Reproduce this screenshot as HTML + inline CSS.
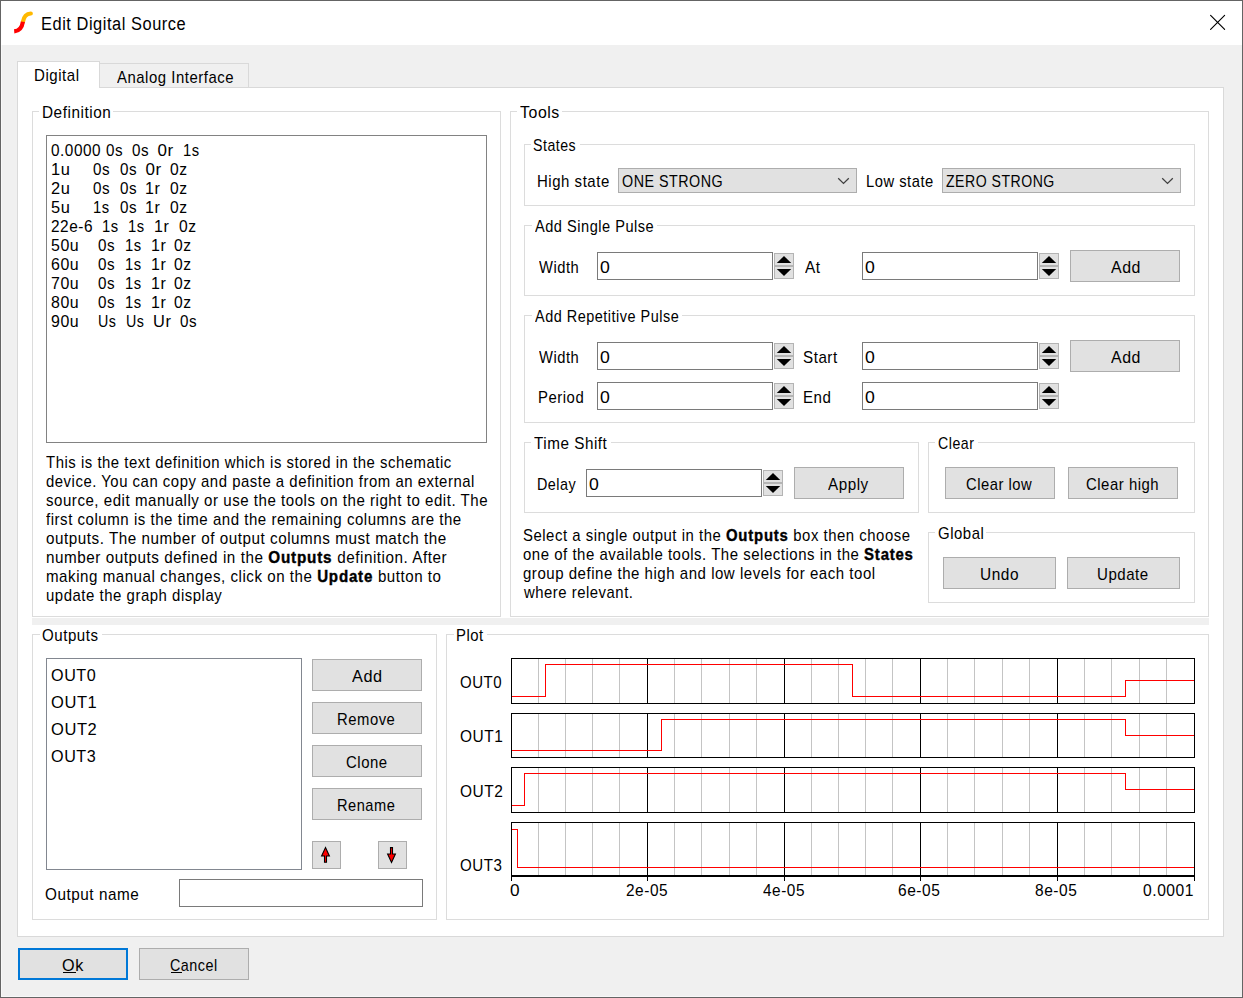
<!DOCTYPE html><html><head><meta charset='utf-8'><style>html,body{margin:0;padding:0;}body{width:1243px;height:998px;overflow:hidden;position:relative;background:#f0f0f0;}.r{position:absolute;box-sizing:border-box;}.t{position:absolute;white-space:nowrap;font-family:'Liberation Sans', sans-serif;line-height:20px;transform-origin:0 0;letter-spacing:0.6px;}b{font-weight:bold;letter-spacing:0.9px;-webkit-text-stroke:0.4px #000}</style></head><body><div class="r" style="left:0px;top:0px;width:1243px;height:998px;background:#f0f0f0;"></div><div class="r" style="left:1px;top:1px;width:1241px;height:44px;background:#ffffff;"></div><div class="r" style="left:0px;top:0px;width:1243px;height:1px;background:#646464;"></div><div class="r" style="left:0px;top:997px;width:1243px;height:1px;background:#646464;"></div><div class="r" style="left:0px;top:0px;width:1px;height:998px;background:#646464;"></div><div class="r" style="left:1242px;top:0px;width:1px;height:998px;background:#646464;"></div><div class="r" style="left:1px;top:45px;width:1px;height:952px;background:#f8f8f8;"></div><div class="r" style="left:1px;top:996px;width:1241px;height:1px;background:#f8f8f8;"></div><svg class="r" style="left:0;top:0" width="60" height="45"><path d="M30.8,13.5 C26.2,13.7 23.7,17.2 22.9,21.9" fill="none" stroke="#ffb900" stroke-width="4.2" stroke-linecap="round"/><path d="M22.9,21.7 C22.1,27.2 19.4,30.9 14.2,31.4" fill="none" stroke="#ff0000" stroke-width="4.2"/></svg><svg class="r" style="left:1200px;top:5px" width="35" height="35"><path d="M10.6,10.4 L24.6,24.4 M24.6,10.4 L10.6,24.4" stroke="#000" stroke-width="1.15" stroke-linecap="round" fill="none"/></svg><div class="r" style="left:17px;top:87px;width:1207px;height:850px;background:#ffffff;border:1px solid #d9d9d9;"></div><div class="r" style="left:99px;top:63px;width:150px;height:25px;background:#f0f0f0;border:1px solid #d9d9d9;"></div><div class="r" style="left:17px;top:61px;width:83px;height:27px;background:#ffffff;border:1px solid #d9d9d9;border-bottom:none;"></div><div class="r" style="left:18px;top:87px;width:81px;height:2px;background:#ffffff;"></div><div class="r" style="left:32px;top:111px;width:469px;height:506px;border:1px solid #dcdcdc;"></div><div class="r" style="left:39px;top:110px;width:74px;height:3px;background:#ffffff;"></div><div class="r" style="left:510px;top:111px;width:699px;height:506px;border:1px solid #dcdcdc;"></div><div class="r" style="left:517px;top:110px;width:45px;height:3px;background:#ffffff;"></div><div class="r" style="left:524px;top:144px;width:671px;height:62px;border:1px solid #dcdcdc;"></div><div class="r" style="left:531px;top:143px;width:49px;height:3px;background:#ffffff;"></div><div class="r" style="left:524px;top:225px;width:671px;height:71px;border:1px solid #dcdcdc;"></div><div class="r" style="left:532px;top:224px;width:125px;height:3px;background:#ffffff;"></div><div class="r" style="left:524px;top:315px;width:671px;height:108px;border:1px solid #dcdcdc;"></div><div class="r" style="left:532px;top:314px;width:150px;height:3px;background:#ffffff;"></div><div class="r" style="left:524px;top:442px;width:395px;height:71px;border:1px solid #dcdcdc;"></div><div class="r" style="left:531px;top:441px;width:80px;height:3px;background:#ffffff;"></div><div class="r" style="left:928px;top:442px;width:267px;height:71px;border:1px solid #dcdcdc;"></div><div class="r" style="left:935px;top:441px;width:43px;height:3px;background:#ffffff;"></div><div class="r" style="left:928px;top:532px;width:267px;height:71px;border:1px solid #dcdcdc;"></div><div class="r" style="left:935px;top:531px;width:51px;height:3px;background:#ffffff;"></div><div class="r" style="left:32px;top:618px;width:1177px;height:7px;background:#f0f0f0;"></div><div class="r" style="left:32px;top:634px;width:405px;height:286px;border:1px solid #dcdcdc;"></div><div class="r" style="left:40px;top:633px;width:62px;height:3px;background:#ffffff;"></div><div class="r" style="left:446px;top:634px;width:763px;height:286px;border:1px solid #dcdcdc;"></div><div class="r" style="left:454px;top:633px;width:33px;height:3px;background:#ffffff;"></div><div class="r" style="left:46px;top:135px;width:441px;height:308px;background:#ffffff;border:1px solid #828282;"></div><div class="r" style="left:618px;top:168px;width:239px;height:25px;background:#e1e1e1;border:1px solid #adadad;"></div><svg class="r" style="left:831px;top:168px" width="25" height="25"><path d="M7.2,10.3 L12.5,15.4 L17.8,10.3" fill="none" stroke="#404040" stroke-width="1.3"/></svg><div class="r" style="left:942px;top:168px;width:239px;height:25px;background:#e1e1e1;border:1px solid #adadad;"></div><svg class="r" style="left:1155px;top:168px" width="25" height="25"><path d="M7.2,10.3 L12.5,15.4 L17.8,10.3" fill="none" stroke="#404040" stroke-width="1.3"/></svg><div class="r" style="left:597px;top:252px;width:176px;height:28px;background:#ffffff;border:1px solid #7a7a7a;"></div><div class="r" style="left:774px;top:253px;width:20px;height:26px;background:#e1e1e1;border:1px solid #b4b4b4;"></div><div class="r" style="left:774px;top:265px;width:20px;height:2px;background:#b4b4b4;"></div><svg class="r" style="left:774px;top:253px" width="20" height="26"><path d="M2.8,10.0 L10.0,3.0 L17.2,10.0 Z" fill="#000"/><path d="M2.8,16.0 L10.0,23.0 L17.2,16.0 Z" fill="#000"/></svg><div class="r" style="left:862px;top:252px;width:176px;height:28px;background:#ffffff;border:1px solid #7a7a7a;"></div><div class="r" style="left:1039px;top:253px;width:20px;height:26px;background:#e1e1e1;border:1px solid #b4b4b4;"></div><div class="r" style="left:1039px;top:265px;width:20px;height:2px;background:#b4b4b4;"></div><svg class="r" style="left:1039px;top:253px" width="20" height="26"><path d="M2.8,10.0 L10.0,3.0 L17.2,10.0 Z" fill="#000"/><path d="M2.8,16.0 L10.0,23.0 L17.2,16.0 Z" fill="#000"/></svg><div class="r" style="left:1070px;top:250px;width:110px;height:32px;background:#e1e1e1;border:1px solid #adadad;"></div><div class="r" style="left:597px;top:342px;width:176px;height:28px;background:#ffffff;border:1px solid #7a7a7a;"></div><div class="r" style="left:774px;top:343px;width:20px;height:26px;background:#e1e1e1;border:1px solid #b4b4b4;"></div><div class="r" style="left:774px;top:355px;width:20px;height:2px;background:#b4b4b4;"></div><svg class="r" style="left:774px;top:343px" width="20" height="26"><path d="M2.8,10.0 L10.0,3.0 L17.2,10.0 Z" fill="#000"/><path d="M2.8,16.0 L10.0,23.0 L17.2,16.0 Z" fill="#000"/></svg><div class="r" style="left:862px;top:342px;width:176px;height:28px;background:#ffffff;border:1px solid #7a7a7a;"></div><div class="r" style="left:1039px;top:343px;width:20px;height:26px;background:#e1e1e1;border:1px solid #b4b4b4;"></div><div class="r" style="left:1039px;top:355px;width:20px;height:2px;background:#b4b4b4;"></div><svg class="r" style="left:1039px;top:343px" width="20" height="26"><path d="M2.8,10.0 L10.0,3.0 L17.2,10.0 Z" fill="#000"/><path d="M2.8,16.0 L10.0,23.0 L17.2,16.0 Z" fill="#000"/></svg><div class="r" style="left:1070px;top:340px;width:110px;height:32px;background:#e1e1e1;border:1px solid #adadad;"></div><div class="r" style="left:597px;top:382px;width:176px;height:28px;background:#ffffff;border:1px solid #7a7a7a;"></div><div class="r" style="left:774px;top:383px;width:20px;height:26px;background:#e1e1e1;border:1px solid #b4b4b4;"></div><div class="r" style="left:774px;top:395px;width:20px;height:2px;background:#b4b4b4;"></div><svg class="r" style="left:774px;top:383px" width="20" height="26"><path d="M2.8,10.0 L10.0,3.0 L17.2,10.0 Z" fill="#000"/><path d="M2.8,16.0 L10.0,23.0 L17.2,16.0 Z" fill="#000"/></svg><div class="r" style="left:862px;top:382px;width:176px;height:28px;background:#ffffff;border:1px solid #7a7a7a;"></div><div class="r" style="left:1039px;top:383px;width:20px;height:26px;background:#e1e1e1;border:1px solid #b4b4b4;"></div><div class="r" style="left:1039px;top:395px;width:20px;height:2px;background:#b4b4b4;"></div><svg class="r" style="left:1039px;top:383px" width="20" height="26"><path d="M2.8,10.0 L10.0,3.0 L17.2,10.0 Z" fill="#000"/><path d="M2.8,16.0 L10.0,23.0 L17.2,16.0 Z" fill="#000"/></svg><div class="r" style="left:586px;top:469px;width:176px;height:28px;background:#ffffff;border:1px solid #7a7a7a;"></div><div class="r" style="left:763px;top:470px;width:20px;height:26px;background:#e1e1e1;border:1px solid #b4b4b4;"></div><div class="r" style="left:763px;top:482px;width:20px;height:2px;background:#b4b4b4;"></div><svg class="r" style="left:763px;top:470px" width="20" height="26"><path d="M2.8,10.0 L10.0,3.0 L17.2,10.0 Z" fill="#000"/><path d="M2.8,16.0 L10.0,23.0 L17.2,16.0 Z" fill="#000"/></svg><div class="r" style="left:794px;top:467px;width:110px;height:32px;background:#e1e1e1;border:1px solid #adadad;"></div><div class="r" style="left:945px;top:467px;width:110px;height:32px;background:#e1e1e1;border:1px solid #adadad;"></div><div class="r" style="left:1068px;top:467px;width:110px;height:32px;background:#e1e1e1;border:1px solid #adadad;"></div><div class="r" style="left:943px;top:557px;width:113px;height:32px;background:#e1e1e1;border:1px solid #adadad;"></div><div class="r" style="left:1067px;top:557px;width:113px;height:32px;background:#e1e1e1;border:1px solid #adadad;"></div><div class="r" style="left:46px;top:658px;width:256px;height:212px;background:#ffffff;border:1px solid #828790;"></div><div class="r" style="left:312px;top:659px;width:110px;height:32px;background:#e1e1e1;border:1px solid #adadad;"></div><div class="r" style="left:312px;top:702px;width:110px;height:32px;background:#e1e1e1;border:1px solid #adadad;"></div><div class="r" style="left:312px;top:745px;width:110px;height:32px;background:#e1e1e1;border:1px solid #adadad;"></div><div class="r" style="left:312px;top:788px;width:110px;height:32px;background:#e1e1e1;border:1px solid #adadad;"></div><div class="r" style="left:312px;top:841px;width:29px;height:28px;background:#e1e1e1;border:1px solid #adadad;"></div><div class="r" style="left:378px;top:841px;width:29px;height:28px;background:#e1e1e1;border:1px solid #adadad;"></div><svg class="r" style="left:312px;top:841px" width="29" height="28"><path d="M13.5,6.6 L17.4,15.0 L14.5,15.0 L14.5,21.2 L12.5,21.2 L12.5,15.0 L9.6,15.0 Z" fill="#ff0000" stroke="#000" stroke-width="1.1" stroke-linejoin="miter"/></svg><svg class="r" style="left:378px;top:841px" width="29" height="28"><path d="M13.5,21.4 L17.4,13.0 L14.5,13.0 L14.5,6.6 L12.5,6.6 L12.5,13.0 L9.6,13.0 Z" fill="#ff0000" stroke="#000" stroke-width="1.1" stroke-linejoin="miter"/></svg><div class="r" style="left:179px;top:879px;width:244px;height:28px;background:#ffffff;border:1px solid #7a7a7a;"></div><svg class="r" style="left:0;top:0" width="1243" height="998" shape-rendering="crispEdges"><rect x="538" y="659" width="1" height="44" fill="#c4c4c4"/><rect x="565" y="659" width="1" height="44" fill="#c4c4c4"/><rect x="592" y="659" width="1" height="44" fill="#c4c4c4"/><rect x="619" y="659" width="1" height="44" fill="#c4c4c4"/><rect x="647" y="658" width="1" height="46" fill="#000000"/><rect x="674" y="659" width="1" height="44" fill="#c4c4c4"/><rect x="701" y="659" width="1" height="44" fill="#c4c4c4"/><rect x="729" y="659" width="1" height="44" fill="#c4c4c4"/><rect x="756" y="659" width="1" height="44" fill="#c4c4c4"/><rect x="784" y="658" width="1" height="46" fill="#000000"/><rect x="811" y="659" width="1" height="44" fill="#c4c4c4"/><rect x="838" y="659" width="1" height="44" fill="#c4c4c4"/><rect x="865" y="659" width="1" height="44" fill="#c4c4c4"/><rect x="892" y="659" width="1" height="44" fill="#c4c4c4"/><rect x="920" y="658" width="1" height="46" fill="#000000"/><rect x="947" y="659" width="1" height="44" fill="#c4c4c4"/><rect x="974" y="659" width="1" height="44" fill="#c4c4c4"/><rect x="1002" y="659" width="1" height="44" fill="#c4c4c4"/><rect x="1029" y="659" width="1" height="44" fill="#c4c4c4"/><rect x="1057" y="658" width="1" height="46" fill="#000000"/><rect x="1084" y="659" width="1" height="44" fill="#c4c4c4"/><rect x="1111" y="659" width="1" height="44" fill="#c4c4c4"/><rect x="1139" y="659" width="1" height="44" fill="#c4c4c4"/><rect x="1166" y="659" width="1" height="44" fill="#c4c4c4"/><rect x="511" y="658" width="684" height="1" fill="#000"/><rect x="511" y="703" width="684" height="1" fill="#000"/><rect x="511" y="658" width="1" height="46" fill="#000"/><rect x="1194" y="658" width="1" height="46" fill="#000"/><rect x="538" y="714" width="1" height="43" fill="#c4c4c4"/><rect x="565" y="714" width="1" height="43" fill="#c4c4c4"/><rect x="592" y="714" width="1" height="43" fill="#c4c4c4"/><rect x="619" y="714" width="1" height="43" fill="#c4c4c4"/><rect x="647" y="713" width="1" height="45" fill="#000000"/><rect x="674" y="714" width="1" height="43" fill="#c4c4c4"/><rect x="701" y="714" width="1" height="43" fill="#c4c4c4"/><rect x="729" y="714" width="1" height="43" fill="#c4c4c4"/><rect x="756" y="714" width="1" height="43" fill="#c4c4c4"/><rect x="784" y="713" width="1" height="45" fill="#000000"/><rect x="811" y="714" width="1" height="43" fill="#c4c4c4"/><rect x="838" y="714" width="1" height="43" fill="#c4c4c4"/><rect x="865" y="714" width="1" height="43" fill="#c4c4c4"/><rect x="892" y="714" width="1" height="43" fill="#c4c4c4"/><rect x="920" y="713" width="1" height="45" fill="#000000"/><rect x="947" y="714" width="1" height="43" fill="#c4c4c4"/><rect x="974" y="714" width="1" height="43" fill="#c4c4c4"/><rect x="1002" y="714" width="1" height="43" fill="#c4c4c4"/><rect x="1029" y="714" width="1" height="43" fill="#c4c4c4"/><rect x="1057" y="713" width="1" height="45" fill="#000000"/><rect x="1084" y="714" width="1" height="43" fill="#c4c4c4"/><rect x="1111" y="714" width="1" height="43" fill="#c4c4c4"/><rect x="1139" y="714" width="1" height="43" fill="#c4c4c4"/><rect x="1166" y="714" width="1" height="43" fill="#c4c4c4"/><rect x="511" y="713" width="684" height="1" fill="#000"/><rect x="511" y="757" width="684" height="1" fill="#000"/><rect x="511" y="713" width="1" height="45" fill="#000"/><rect x="1194" y="713" width="1" height="45" fill="#000"/><rect x="538" y="768" width="1" height="44" fill="#c4c4c4"/><rect x="565" y="768" width="1" height="44" fill="#c4c4c4"/><rect x="592" y="768" width="1" height="44" fill="#c4c4c4"/><rect x="619" y="768" width="1" height="44" fill="#c4c4c4"/><rect x="647" y="767" width="1" height="46" fill="#000000"/><rect x="674" y="768" width="1" height="44" fill="#c4c4c4"/><rect x="701" y="768" width="1" height="44" fill="#c4c4c4"/><rect x="729" y="768" width="1" height="44" fill="#c4c4c4"/><rect x="756" y="768" width="1" height="44" fill="#c4c4c4"/><rect x="784" y="767" width="1" height="46" fill="#000000"/><rect x="811" y="768" width="1" height="44" fill="#c4c4c4"/><rect x="838" y="768" width="1" height="44" fill="#c4c4c4"/><rect x="865" y="768" width="1" height="44" fill="#c4c4c4"/><rect x="892" y="768" width="1" height="44" fill="#c4c4c4"/><rect x="920" y="767" width="1" height="46" fill="#000000"/><rect x="947" y="768" width="1" height="44" fill="#c4c4c4"/><rect x="974" y="768" width="1" height="44" fill="#c4c4c4"/><rect x="1002" y="768" width="1" height="44" fill="#c4c4c4"/><rect x="1029" y="768" width="1" height="44" fill="#c4c4c4"/><rect x="1057" y="767" width="1" height="46" fill="#000000"/><rect x="1084" y="768" width="1" height="44" fill="#c4c4c4"/><rect x="1111" y="768" width="1" height="44" fill="#c4c4c4"/><rect x="1139" y="768" width="1" height="44" fill="#c4c4c4"/><rect x="1166" y="768" width="1" height="44" fill="#c4c4c4"/><rect x="511" y="767" width="684" height="1" fill="#000"/><rect x="511" y="812" width="684" height="1" fill="#000"/><rect x="511" y="767" width="1" height="46" fill="#000"/><rect x="1194" y="767" width="1" height="46" fill="#000"/><rect x="538" y="823" width="1" height="53" fill="#c4c4c4"/><rect x="565" y="823" width="1" height="53" fill="#c4c4c4"/><rect x="592" y="823" width="1" height="53" fill="#c4c4c4"/><rect x="619" y="823" width="1" height="53" fill="#c4c4c4"/><rect x="647" y="822" width="1" height="55" fill="#000000"/><rect x="674" y="823" width="1" height="53" fill="#c4c4c4"/><rect x="701" y="823" width="1" height="53" fill="#c4c4c4"/><rect x="729" y="823" width="1" height="53" fill="#c4c4c4"/><rect x="756" y="823" width="1" height="53" fill="#c4c4c4"/><rect x="784" y="822" width="1" height="55" fill="#000000"/><rect x="811" y="823" width="1" height="53" fill="#c4c4c4"/><rect x="838" y="823" width="1" height="53" fill="#c4c4c4"/><rect x="865" y="823" width="1" height="53" fill="#c4c4c4"/><rect x="892" y="823" width="1" height="53" fill="#c4c4c4"/><rect x="920" y="822" width="1" height="55" fill="#000000"/><rect x="947" y="823" width="1" height="53" fill="#c4c4c4"/><rect x="974" y="823" width="1" height="53" fill="#c4c4c4"/><rect x="1002" y="823" width="1" height="53" fill="#c4c4c4"/><rect x="1029" y="823" width="1" height="53" fill="#c4c4c4"/><rect x="1057" y="822" width="1" height="55" fill="#000000"/><rect x="1084" y="823" width="1" height="53" fill="#c4c4c4"/><rect x="1111" y="823" width="1" height="53" fill="#c4c4c4"/><rect x="1139" y="823" width="1" height="53" fill="#c4c4c4"/><rect x="1166" y="823" width="1" height="53" fill="#c4c4c4"/><rect x="511" y="822" width="684" height="1" fill="#000"/><rect x="511" y="876" width="684" height="1" fill="#000"/><rect x="511" y="822" width="1" height="55" fill="#000"/><rect x="1194" y="822" width="1" height="55" fill="#000"/><rect x="511" y="875" width="684" height="2" fill="#000"/><rect x="511" y="877" width="1" height="4" fill="#000"/><rect x="647" y="877" width="1" height="4" fill="#000"/><rect x="784" y="877" width="1" height="4" fill="#000"/><rect x="920" y="877" width="1" height="4" fill="#000"/><rect x="1057" y="877" width="1" height="4" fill="#000"/><rect x="1194" y="877" width="1" height="4" fill="#000"/><rect x="512" y="696" width="34" height="1" fill="#ff0000"/><rect x="545" y="664" width="308" height="1" fill="#ff0000"/><rect x="545" y="664" width="1" height="33" fill="#ff0000"/><rect x="852" y="696" width="274" height="1" fill="#ff0000"/><rect x="852" y="664" width="1" height="33" fill="#ff0000"/><rect x="1125" y="680" width="69" height="1" fill="#ff0000"/><rect x="1125" y="680" width="1" height="17" fill="#ff0000"/><rect x="512" y="750" width="150" height="1" fill="#ff0000"/><rect x="661" y="719" width="465" height="1" fill="#ff0000"/><rect x="661" y="719" width="1" height="32" fill="#ff0000"/><rect x="1125" y="735" width="69" height="1" fill="#ff0000"/><rect x="1125" y="719" width="1" height="17" fill="#ff0000"/><rect x="512" y="805" width="13" height="1" fill="#ff0000"/><rect x="524" y="773" width="602" height="1" fill="#ff0000"/><rect x="524" y="773" width="1" height="33" fill="#ff0000"/><rect x="1125" y="789" width="69" height="1" fill="#ff0000"/><rect x="1125" y="773" width="1" height="17" fill="#ff0000"/><rect x="512" y="829" width="6" height="1" fill="#ff0000"/><rect x="517" y="867" width="677" height="1" fill="#ff0000"/><rect x="517" y="829" width="1" height="39" fill="#ff0000"/></svg><div class="r" style="left:18px;top:948px;width:110px;height:32px;background:#e1e1e1;border:2px solid #0078d7;"></div><div class="r" style="left:63px;top:972px;width:13px;height:1px;background:#000;"></div><div class="r" style="left:139px;top:948px;width:110px;height:32px;background:#e1e1e1;border:1px solid #adadad;"></div><div class="r" style="left:171px;top:972px;width:11px;height:1px;background:#000;"></div><div class="t" style="left:41.39px;top:14px;font-size:18px;color:#000;transform:scaleX(0.9108)">Edit Digital Source</div><div class="t" style="left:34.41px;top:66px;font-size:17px;color:#000;transform:scaleX(0.8857)">Digital</div><div class="t" style="left:117.00px;top:68px;font-size:17px;color:#000;transform:scaleX(0.8773)">Analog Interface</div><div class="t" style="left:41.60px;top:103px;font-size:17px;color:#000;transform:scaleX(0.9014)">Definition</div><div class="t" style="left:520.00px;top:103px;font-size:17px;color:#000;transform:scaleX(0.9341)">Tools</div><div class="t" style="left:533.17px;top:136px;font-size:17px;color:#000;transform:scaleX(0.8340)">States</div><div class="t" style="left:534.70px;top:217px;font-size:17px;color:#000;transform:scaleX(0.8572)">Add Single Pulse</div><div class="t" style="left:534.70px;top:307px;font-size:17px;color:#000;transform:scaleX(0.8497)">Add Repetitive Pulse</div><div class="t" style="left:534.10px;top:434px;font-size:17px;color:#000;transform:scaleX(0.8963)">Time Shift</div><div class="t" style="left:937.67px;top:434px;font-size:17px;color:#000;transform:scaleX(0.8333)">Clear</div><div class="t" style="left:937.62px;top:524px;font-size:17px;color:#000;transform:scaleX(0.8780)">Global</div><div class="t" style="left:41.71px;top:626px;font-size:17px;color:#000;transform:scaleX(0.8871)">Outputs</div><div class="t" style="left:455.82px;top:626px;font-size:17px;color:#000;transform:scaleX(0.8767)">Plot</div><div class="t" style="left:50.70px;top:141px;font-size:17px;color:#000;transform:scaleX(0.9019)">0.0000</div><div class="t" style="left:105.71px;top:141px;font-size:17px;color:#000;transform:scaleX(0.8941)">0s</div><div class="t" style="left:131.51px;top:141px;font-size:17px;color:#000;transform:scaleX(0.8941)">0s</div><div class="t" style="left:157.40px;top:141px;font-size:17px;color:#000;transform:scaleX(1.0000)">0r</div><div class="t" style="left:182.53px;top:141px;font-size:17px;color:#000;transform:scaleX(0.8706)">1s</div><div class="t" style="left:50.64px;top:160px;font-size:17px;color:#000;transform:scaleX(0.9647)">1u</div><div class="t" style="left:93.41px;top:160px;font-size:17px;color:#000;transform:scaleX(0.8941)">0s</div><div class="t" style="left:119.51px;top:160px;font-size:17px;color:#000;transform:scaleX(0.8941)">0s</div><div class="t" style="left:145.40px;top:160px;font-size:17px;color:#000;transform:scaleX(1.0000)">0r</div><div class="t" style="left:170.08px;top:160px;font-size:17px;color:#000;transform:scaleX(0.9176)">0z</div><div class="t" style="left:50.64px;top:179px;font-size:17px;color:#000;transform:scaleX(0.9647)">2u</div><div class="t" style="left:93.41px;top:179px;font-size:17px;color:#000;transform:scaleX(0.8941)">0s</div><div class="t" style="left:119.51px;top:179px;font-size:17px;color:#000;transform:scaleX(0.8941)">0s</div><div class="t" style="left:145.46px;top:179px;font-size:17px;color:#000;transform:scaleX(0.9429)">1r</div><div class="t" style="left:170.08px;top:179px;font-size:17px;color:#000;transform:scaleX(0.9176)">0z</div><div class="t" style="left:50.64px;top:198px;font-size:17px;color:#000;transform:scaleX(0.9647)">5u</div><div class="t" style="left:93.43px;top:198px;font-size:17px;color:#000;transform:scaleX(0.8706)">1s</div><div class="t" style="left:119.51px;top:198px;font-size:17px;color:#000;transform:scaleX(0.8941)">0s</div><div class="t" style="left:145.46px;top:198px;font-size:17px;color:#000;transform:scaleX(0.9429)">1r</div><div class="t" style="left:170.08px;top:198px;font-size:17px;color:#000;transform:scaleX(0.9176)">0z</div><div class="t" style="left:50.70px;top:217px;font-size:17px;color:#000;transform:scaleX(0.9045)">22e-6</div><div class="t" style="left:102.13px;top:217px;font-size:17px;color:#000;transform:scaleX(0.8706)">1s</div><div class="t" style="left:128.13px;top:217px;font-size:17px;color:#000;transform:scaleX(0.8706)">1s</div><div class="t" style="left:154.06px;top:217px;font-size:17px;color:#000;transform:scaleX(0.9429)">1r</div><div class="t" style="left:178.78px;top:217px;font-size:17px;color:#000;transform:scaleX(0.9176)">0z</div><div class="t" style="left:50.66px;top:236px;font-size:17px;color:#000;transform:scaleX(0.9370)">50u</div><div class="t" style="left:97.71px;top:236px;font-size:17px;color:#000;transform:scaleX(0.8941)">0s</div><div class="t" style="left:124.53px;top:236px;font-size:17px;color:#000;transform:scaleX(0.8706)">1s</div><div class="t" style="left:150.56px;top:236px;font-size:17px;color:#000;transform:scaleX(0.9429)">1r</div><div class="t" style="left:174.48px;top:236px;font-size:17px;color:#000;transform:scaleX(0.9176)">0z</div><div class="t" style="left:50.66px;top:255px;font-size:17px;color:#000;transform:scaleX(0.9370)">60u</div><div class="t" style="left:97.71px;top:255px;font-size:17px;color:#000;transform:scaleX(0.8941)">0s</div><div class="t" style="left:124.53px;top:255px;font-size:17px;color:#000;transform:scaleX(0.8706)">1s</div><div class="t" style="left:150.56px;top:255px;font-size:17px;color:#000;transform:scaleX(0.9429)">1r</div><div class="t" style="left:174.48px;top:255px;font-size:17px;color:#000;transform:scaleX(0.9176)">0z</div><div class="t" style="left:50.66px;top:274px;font-size:17px;color:#000;transform:scaleX(0.9370)">70u</div><div class="t" style="left:97.71px;top:274px;font-size:17px;color:#000;transform:scaleX(0.8941)">0s</div><div class="t" style="left:124.53px;top:274px;font-size:17px;color:#000;transform:scaleX(0.8706)">1s</div><div class="t" style="left:150.56px;top:274px;font-size:17px;color:#000;transform:scaleX(0.9429)">1r</div><div class="t" style="left:174.48px;top:274px;font-size:17px;color:#000;transform:scaleX(0.9176)">0z</div><div class="t" style="left:50.66px;top:293px;font-size:17px;color:#000;transform:scaleX(0.9370)">80u</div><div class="t" style="left:97.71px;top:293px;font-size:17px;color:#000;transform:scaleX(0.8941)">0s</div><div class="t" style="left:124.53px;top:293px;font-size:17px;color:#000;transform:scaleX(0.8706)">1s</div><div class="t" style="left:150.56px;top:293px;font-size:17px;color:#000;transform:scaleX(0.9429)">1r</div><div class="t" style="left:174.48px;top:293px;font-size:17px;color:#000;transform:scaleX(0.9176)">0z</div><div class="t" style="left:50.66px;top:312px;font-size:17px;color:#000;transform:scaleX(0.9370)">90u</div><div class="t" style="left:97.76px;top:312px;font-size:17px;color:#000;transform:scaleX(0.8400)">Us</div><div class="t" style="left:125.76px;top:312px;font-size:17px;color:#000;transform:scaleX(0.8400)">Us</div><div class="t" style="left:153.44px;top:312px;font-size:17px;color:#000;transform:scaleX(0.9647)">Ur</div><div class="t" style="left:180.31px;top:312px;font-size:17px;color:#000;transform:scaleX(0.8941)">0s</div><div class="t" style="left:46.40px;top:453px;font-size:17px;color:#000;transform:scaleX(0.8764)">This is the text definition which is stored in the schematic</div><div class="t" style="left:45.52px;top:472px;font-size:17px;color:#000;transform:scaleX(0.8758)">device. You can copy and paste a definition from an external</div><div class="t" style="left:45.51px;top:491px;font-size:17px;color:#000;transform:scaleX(0.8855)">source, edit manually or use the tools on the right to edit. The</div><div class="t" style="left:46.40px;top:510px;font-size:17px;color:#000;transform:scaleX(0.8838)">first column is the time and the remaining columns are the</div><div class="t" style="left:45.50px;top:529px;font-size:17px;color:#000;transform:scaleX(0.8955)">outputs. The number of output columns must match the</div><div class="t" style="left:45.50px;top:548px;font-size:17px;color:#000;transform:scaleX(0.8973)">number outputs defined in the <b>Outputs</b> definition. After</div><div class="t" style="left:45.51px;top:567px;font-size:17px;color:#000;transform:scaleX(0.8887)">making manual changes, click on the <b>Update</b> button to</div><div class="t" style="left:45.52px;top:586px;font-size:17px;color:#000;transform:scaleX(0.8789)">update the graph display</div><div class="t" style="left:537.12px;top:172px;font-size:17px;color:#000;transform:scaleX(0.8812)">High state</div><div class="t" style="left:621.76px;top:172px;font-size:17px;color:#000;transform:scaleX(0.8415)">ONE STRONG</div><div class="t" style="left:865.53px;top:172px;font-size:17px;color:#000;transform:scaleX(0.8671)">Low state</div><div class="t" style="left:945.67px;top:172px;font-size:17px;color:#000;transform:scaleX(0.8287)">ZERO STRONG</div><div class="t" style="left:538.80px;top:258px;font-size:17px;color:#000;transform:scaleX(0.8667)">Width</div><div class="t" style="left:599.56px;top:258px;font-size:17px;color:#000;transform:scaleX(1.0375)">0</div><div class="t" style="left:804.80px;top:258px;font-size:17px;color:#000;transform:scaleX(0.9059)">At</div><div class="t" style="left:864.56px;top:258px;font-size:17px;color:#000;transform:scaleX(1.0375)">0</div><div class="t" style="left:1110.50px;top:258px;font-size:17px;color:#000;transform:scaleX(0.9367)">Add</div><div class="t" style="left:538.80px;top:348px;font-size:17px;color:#000;transform:scaleX(0.8667)">Width</div><div class="t" style="left:599.56px;top:348px;font-size:17px;color:#000;transform:scaleX(1.0375)">0</div><div class="t" style="left:802.71px;top:348px;font-size:17px;color:#000;transform:scaleX(0.8919)">Start</div><div class="t" style="left:864.56px;top:348px;font-size:17px;color:#000;transform:scaleX(1.0375)">0</div><div class="t" style="left:1110.50px;top:348px;font-size:17px;color:#000;transform:scaleX(0.9367)">Add</div><div class="t" style="left:537.92px;top:388px;font-size:17px;color:#000;transform:scaleX(0.8760)">Period</div><div class="t" style="left:599.56px;top:388px;font-size:17px;color:#000;transform:scaleX(1.0375)">0</div><div class="t" style="left:803.11px;top:388px;font-size:17px;color:#000;transform:scaleX(0.8897)">End</div><div class="t" style="left:864.56px;top:388px;font-size:17px;color:#000;transform:scaleX(1.0375)">0</div><div class="t" style="left:537.16px;top:475px;font-size:17px;color:#000;transform:scaleX(0.8444)">Delay</div><div class="t" style="left:588.56px;top:475px;font-size:17px;color:#000;transform:scaleX(1.0375)">0</div><div class="t" style="left:828.30px;top:475px;font-size:17px;color:#000;transform:scaleX(0.8956)">Apply</div><div class="t" style="left:966.33px;top:475px;font-size:17px;color:#000;transform:scaleX(0.8680)">Clear low</div><div class="t" style="left:1086.12px;top:475px;font-size:17px;color:#000;transform:scaleX(0.8765)">Clear high</div><div class="t" style="left:979.69px;top:565px;font-size:17px;color:#000;transform:scaleX(0.9073)">Undo</div><div class="t" style="left:1097.31px;top:565px;font-size:17px;color:#000;transform:scaleX(0.8857)">Update</div><div class="t" style="left:523.42px;top:526px;font-size:17px;color:#000;transform:scaleX(0.8764)">Select a single output in the <b>Outputs</b> box then choose</div><div class="t" style="left:523.42px;top:545px;font-size:17px;color:#000;transform:scaleX(0.8794)">one of the available tools. The selections in the <b>States</b></div><div class="t" style="left:523.42px;top:564px;font-size:17px;color:#000;transform:scaleX(0.8826)">group define the high and low levels for each tool</div><div class="t" style="left:524.30px;top:583px;font-size:17px;color:#000;transform:scaleX(0.8740)">where relevant.</div><div class="t" style="left:50.75px;top:666px;font-size:17px;color:#000;transform:scaleX(0.9500)">OUT0</div><div class="t" style="left:50.73px;top:693px;font-size:17px;color:#000;transform:scaleX(0.9711)">OUT1</div><div class="t" style="left:50.73px;top:720px;font-size:17px;color:#000;transform:scaleX(0.9711)">OUT2</div><div class="t" style="left:50.75px;top:747px;font-size:17px;color:#000;transform:scaleX(0.9500)">OUT3</div><div class="t" style="left:352.00px;top:667px;font-size:17px;color:#000;transform:scaleX(0.9567)">Add</div><div class="t" style="left:337.33px;top:710px;font-size:17px;color:#000;transform:scaleX(0.8723)">Remove</div><div class="t" style="left:346.12px;top:753px;font-size:17px;color:#000;transform:scaleX(0.8778)">Clone</div><div class="t" style="left:337.34px;top:796px;font-size:17px;color:#000;transform:scaleX(0.8591)">Rename</div><div class="t" style="left:45.40px;top:885px;font-size:17px;color:#000;transform:scaleX(0.8990)">Output name</div><div class="t" style="left:459.92px;top:673px;font-size:17px;color:#000;transform:scaleX(0.8826)">OUT0</div><div class="t" style="left:459.69px;top:727px;font-size:17px;color:#000;transform:scaleX(0.9089)">OUT1</div><div class="t" style="left:459.69px;top:782px;font-size:17px;color:#000;transform:scaleX(0.9089)">OUT2</div><div class="t" style="left:459.71px;top:856px;font-size:17px;color:#000;transform:scaleX(0.8891)">OUT3</div><div class="t" style="left:510.29px;top:881px;font-size:17px;color:#000;transform:scaleX(1.0125)">0</div><div class="t" style="left:625.59px;top:881px;font-size:17px;color:#000;transform:scaleX(0.9068)">2e-05</div><div class="t" style="left:762.80px;top:881px;font-size:17px;color:#000;transform:scaleX(0.9044)">4e-05</div><div class="t" style="left:898.39px;top:881px;font-size:17px;color:#000;transform:scaleX(0.9136)">6e-05</div><div class="t" style="left:1035.39px;top:881px;font-size:17px;color:#000;transform:scaleX(0.9114)">8e-05</div><div class="t" style="left:1143.38px;top:881px;font-size:17px;color:#000;transform:scaleX(0.9189)">0.0001</div><div class="t" style="left:62.45px;top:956px;font-size:17px;color:#000;transform:scaleX(0.9524)">Ok</div><div class="t" style="left:170.16px;top:956px;font-size:17px;color:#000;transform:scaleX(0.8444)">Cancel</div></body></html>
